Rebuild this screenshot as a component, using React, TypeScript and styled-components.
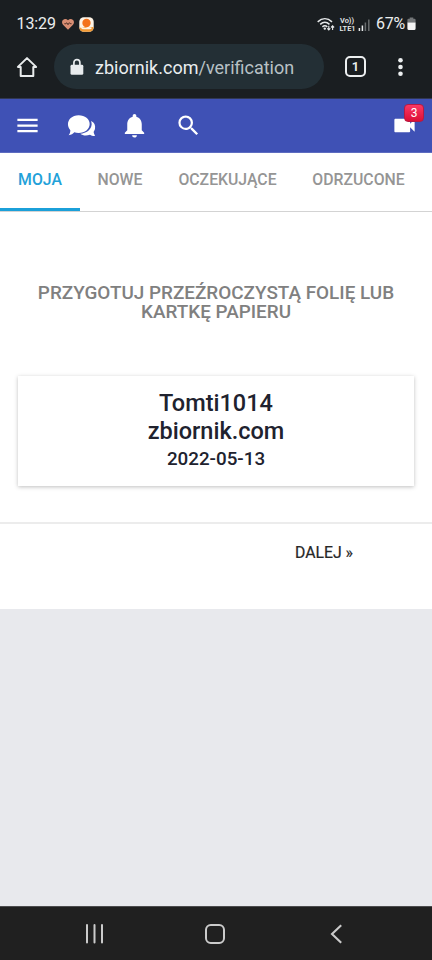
import React from "react";
import styled, { createGlobalStyle } from "styled-components";
import { MdMenu, MdNotifications, MdSearch, MdVideocam } from "react-icons/md";

const GlobalStyle = createGlobalStyle`
  * { box-sizing: border-box; }
  html, body { margin: 0; padding: 0; background: #e8e9ed; }
  body { font-family: Roboto, "Noto Sans", sans-serif; }
  svg { display: block; flex: none; }
`;

const Screen = styled.div`
  width: 432px;
  height: 960px;
  display: flex;
  flex-direction: column;
  overflow: hidden;
  background: #e8e9ed;
`;

const BrowserHeader = styled.header`
  height: 99px;
  flex: none;
  background: #1a1e21;
  border-bottom: 1px solid #303753;
`;

const StatusBar = styled.div`
  height: 44px;
  padding: 4px 16px 0 16.5px;
  display: flex;
  align-items: center;
  color: #eceeef;
`;

const Clock = styled.span`
  width: 44.5px;
  font-size: 16px;
  line-height: 20px;
  letter-spacing: -0.1px;
`;

const StatusText = styled.span`
  margin-left: auto;
  width: 31px;
  font-size: 16px;
  line-height: 20px;
  letter-spacing: -0.2px;
`;

const NotificationIcons = styled.div`
  display: flex;
  align-items: center;
  gap: 4px;
`;

const StatusIcons = styled.div`
  display: flex;
  margin-left: auto;
  & + ${StatusText} { margin-left: 5px; }
`;

const AddressRow = styled.div`
  height: 45px;
  padding: 0 23px 0 16px;
  display: flex;
  align-items: center;
`;

const AddressPill = styled.div`
  width: 270px;
  height: 45px;
  flex: none;
  margin: 0 21px 0 16px;
  padding-left: 15px;
  display: flex;
  align-items: center;
  gap: 10px;
  border-radius: 23px;
  background: #232f35;
`;

const Url = styled.span`
  font-size: 18px;
  line-height: 24px;
  padding-top: 2px;
  white-space: nowrap;
  color: #e9edef;
`;

const UrlPath = styled.span`
  color: #b8c1c5;
`;

const TabCount = styled.div`
  width: 21px;
  height: 21px;
  flex: none;
  display: flex;
  align-items: center;
  justify-content: center;
  border: 2px solid #eceff0;
  border-radius: 5px;
  color: #eceff0;
  font-size: 13px;
  font-weight: 600;
  line-height: 17px;
  & + svg { margin-left: auto; }
`;

const AppBar = styled.nav`
  height: 54px;
  flex: none;
  padding: 0 14px 0 13.5px;
  display: flex;
  align-items: center;
  background: #3f51b5;
  border-bottom: 1px solid #5d6cc0;
  color: #fff;
`;

const BarButton = styled.div<{ $gap?: number; $push?: boolean }>`
  position: relative;
  display: flex;
  margin-left: ${(p) => (p.$push ? "auto" : `${p.$gap ?? 0}px`)};
`;

const Badge = styled.span`
  position: absolute;
  left: 13px;
  top: -8px;
  width: 20px;
  height: 18px;
  border: 1px solid #b51a43;
  border-radius: 4px;
  background: linear-gradient(#fb3864, #dc0f36);
  color: #fff;
  font-size: 12px;
  line-height: 16px;
  text-align: center;
`;

const Panel = styled.main`
  height: 456px;
  flex: none;
  background: #fff;
`;

const Tabs = styled.div`
  height: 59px;
  display: flex;
  border-bottom: 1px solid #d3d3d3;
`;

const Tab = styled.div<{ $active?: boolean; $width: number }>`
  width: ${(p) => p.$width}px;
  height: 58px;
  padding-top: 17px;
  font-size: 15.8px;
  font-weight: 500;
  line-height: 20px;
  text-align: center;
  color: ${(p) => (p.$active ? "#22a1d9" : "#959595")};
  border-bottom: ${(p) => (p.$active ? "3px solid #1ba0d9" : "none")};
`;

const Heading = styled.h1`
  margin: 71px 0 0;
  font-size: 18.9px;
  font-weight: 500;
  line-height: 19px;
  text-align: center;
  color: #808080;
`;

const Card = styled.section`
  height: 110px;
  margin: 55px 18px 0;
  padding-top: 13px;
  text-align: center;
  font-weight: 500;
  color: #20222e;
  background: #fff;
  box-shadow: 0 1px 4px rgba(0, 0, 0, 0.25);
`;

const CardLine = styled.div`
  font-size: 23.5px;
  line-height: 28px;
`;

const CardDate = styled.div`
  font-size: 18.8px;
  line-height: 28px;
`;

const Footer = styled.footer`
  margin-top: 36px;
  padding: 19px 79px 0 0;
  border-top: 2px solid #ececec;
  font-size: 15.8px;
  line-height: 20px;
  text-align: right;
  color: #272727;
  -webkit-text-stroke: 0.2px #272727;
`;

const SystemNav = styled.div`
  height: 54px;
  flex: none;
  margin-top: auto;
  padding: 0 89px 0 85px;
  display: flex;
  align-items: center;
  gap: 100px;
  background: #202020;
  border-top: 1px solid #4c4c4e;
  & > :last-child { margin-left: auto; }
`;

const HeartIcon = () => (
  <svg width="14" height="14" viewBox="0 0 14 14">
    <path d="M7 12.8 2 7.7C-1.1 3.6 4 .1 7 3.3c3-3.2 8.1.3 5 4.4Z" fill="#d98e73" />
    <path d="M3.4 6.7h1.4l1-.9 1.2 1.9 1.4-2 .9 1h1.2" fill="none" stroke="#4a2c23" strokeWidth="1" />
  </svg>
);

const WeatherIcon = () => (
  <svg width="15" height="15" viewBox="0 0 15 15">
    <rect x=".3" y=".3" width="14.4" height="14.4" rx="4.5" fill="#fff4e6" />
    <path d="M.4 10.3c3 2 4.4-1 7.1.4 2.6 1.4 4.5-1.5 7.1-.4 0 3-1.8 4.4-4.3 4.4H4.7C2.1 14.7.4 13.3.4 10.3Z" fill="#f29a35" />
    <path d="M2.6 11.2c3 .5 6.8.5 9.8 0" fill="none" stroke="#fff4e6" strokeWidth="1.4" />
    <circle cx="7.5" cy="6" r="4.2" fill="#f4731c" />
  </svg>
);

const SignalCluster = () => (
  <svg width="54" height="15" viewBox="0 0 54 15">
    <g fill="none" stroke="#e7eaeb" strokeWidth="1.5">
      <path d="M.7 4.9c4.4-4.1 9.9-4.1 14.3 0M3.2 7.4c2.9-2.6 6.4-2.6 9.3 0M5.4 9.9c1.6-1.4 3.3-1.4 4.9 0" />
    </g>
    <circle cx="7.8" cy="11.6" r="1.2" fill="#e7eaeb" />
    <path d="M11.8 8.8v4m-1.5-1.4 1.5 1.6 1.5-1.6M15.6 13V9m-1.5 1.5 1.5-1.6 1.5 1.6" fill="none" stroke="#e7eaeb" strokeWidth="1.1" />
    <g fill="#e7eaeb" fontFamily="Roboto, sans-serif" fontWeight="600">
      <text x="23" y="6" fontSize="7" textLength="14" lengthAdjust="spacingAndGlyphs">Vo))</text>
      <text x="22.5" y="14" fontSize="8" textLength="16" lengthAdjust="spacingAndGlyphs">LTE1</text>
    </g>
    <path d="M42.4 11v3M45.4 8.5V14" stroke="#e7eaeb" strokeWidth="1.5" />
    <path d="M48.4 5.5V14M51.8 2.5V14" stroke="#686c6e" strokeWidth="1.5" />
  </svg>
);

const BatteryIcon = () => (
  <svg width="9" height="14" viewBox="0 0 9 14">
    <path d="M2.7 1.7V.5h3.6v1.2H7.5Q8.6 1.7 8.6 3V5.7H.4V3Q.4 1.7 1.5 1.7Z" fill="#737678" />
    <path d="M.4 5.5h8.2v6Q8.6 13 7.2 13H1.8Q.4 13 .4 11.5Z" fill="#f4f4f4" />
  </svg>
);

const HomeIcon = () => (
  <svg width="22" height="22" viewBox="0 0 22 22">
    <path d="M11 2.1 1.9 10.9H4.7V20h12.6v-9.1h2.8Z" fill="none" stroke="#e8ebec" strokeWidth="2" strokeLinejoin="round" />
  </svg>
);

const LockIcon = () => (
  <svg width="16" height="18" viewBox="0 0 16 18">
    <rect x="1.5" y="6.8" width="12.8" height="10" rx="1.4" fill="#e7ebed" />
    <path d="M4.9 7.4V4.8c0-4.2 6-4.2 6 0v2.6" fill="none" stroke="#e7ebed" strokeWidth="1.7" />
  </svg>
);

const DotsIcon = () => (
  <svg width="16" height="22" viewBox="0 0 16 22" fill="#eceff0">
    <circle cx="7.5" cy="4.2" r="2.3" />
    <circle cx="7.5" cy="11" r="2.3" />
    <circle cx="7.5" cy="17.8" r="2.3" />
  </svg>
);

const ChatIcon = () => (
  <svg width="30" height="25" viewBox="0 0 90 75">
    <path d="M72 24C82 28 86 37 84 47c-1 5-4 8-4 10 0 4 3 8 4 12-7 0-12-2-15-4-10 4-22 3-29-3 18 0 33-12 34-28 0-4-1-7-2-10Z" fill="#fff" />
    <path d="M35 7c19 0 33 11 33 26S54 60 35 60c-5 0-9-1-13-2-4 4-9 8-17 9 4-5 5-10 5-15C-6 34 6 7 35 7Z" fill="#fff" />
  </svg>
);

const RecentsIcon = () => (
  <svg width="20" height="20" viewBox="0 0 20 20">
    <path d="M2 1v17.5M9.5 1v17.5M17 1v17.5" stroke="#cbcbcb" strokeWidth="2" strokeLinecap="round" />
  </svg>
);

const HomeKeyIcon = () => (
  <svg width="20" height="20" viewBox="0 0 20 20">
    <rect x="1" y="1" width="18" height="18" rx="4.8" fill="none" stroke="#cbcbcb" strokeWidth="2" />
  </svg>
);

const BackIcon = () => (
  <svg width="13" height="20" viewBox="0 0 13 20">
    <path d="M11.2 1.2 2 10l9.2 8.8" fill="none" stroke="#cbcbcb" strokeWidth="2.1" />
  </svg>
);

const TABS = [
  { label: "MOJA", width: 80, active: true },
  { label: "NOWE", width: 80 },
  { label: "OCZEKUJĄCE", width: 135 },
  { label: "ODRZUCONE", width: 127 },
];

export default function App() {
  return (
    <>
      <GlobalStyle />
      <Screen>
        <BrowserHeader>
          <StatusBar>
            <Clock>13:29</Clock>
            <NotificationIcons>
              <HeartIcon />
              <WeatherIcon />
            </NotificationIcons>
            <StatusIcons>
              <SignalCluster />
            </StatusIcons>
            <StatusText>67%</StatusText>
            <BatteryIcon />
          </StatusBar>
          <AddressRow>
            <HomeIcon />
            <AddressPill>
              <LockIcon />
              <Url>
                zbiornik.com<UrlPath>/verification</UrlPath>
              </Url>
            </AddressPill>
            <TabCount>1</TabCount>
            <DotsIcon />
          </AddressRow>
        </BrowserHeader>
        <AppBar>
          <BarButton>
            <MdMenu size={27} />
          </BarButton>
          <BarButton $gap={26.5}>
            <ChatIcon />
          </BarButton>
          <BarButton $gap={23}>
            <MdNotifications size={29} />
          </BarButton>
          <BarButton $gap={26}>
            <MdSearch size={27} />
          </BarButton>
          <BarButton $push>
            <MdVideocam size={27} />
            <Badge>3</Badge>
          </BarButton>
        </AppBar>
        <Panel>
          <Tabs>
            {TABS.map((tab) => (
              <Tab key={tab.label} $width={tab.width} $active={tab.active}>
                {tab.label}
              </Tab>
            ))}
          </Tabs>
          <Heading>
            PRZYGOTUJ PRZEŹROCZYSTĄ FOLIĘ LUB
            <br />
            KARTKĘ PAPIERU
          </Heading>
          <Card>
            <CardLine>Tomti1014</CardLine>
            <CardLine>zbiornik.com</CardLine>
            <CardDate>2022-05-13</CardDate>
          </Card>
          <Footer>DALEJ »</Footer>
        </Panel>
        <SystemNav>
          <RecentsIcon />
          <HomeKeyIcon />
          <BackIcon />
        </SystemNav>
      </Screen>
    </>
  );
}
